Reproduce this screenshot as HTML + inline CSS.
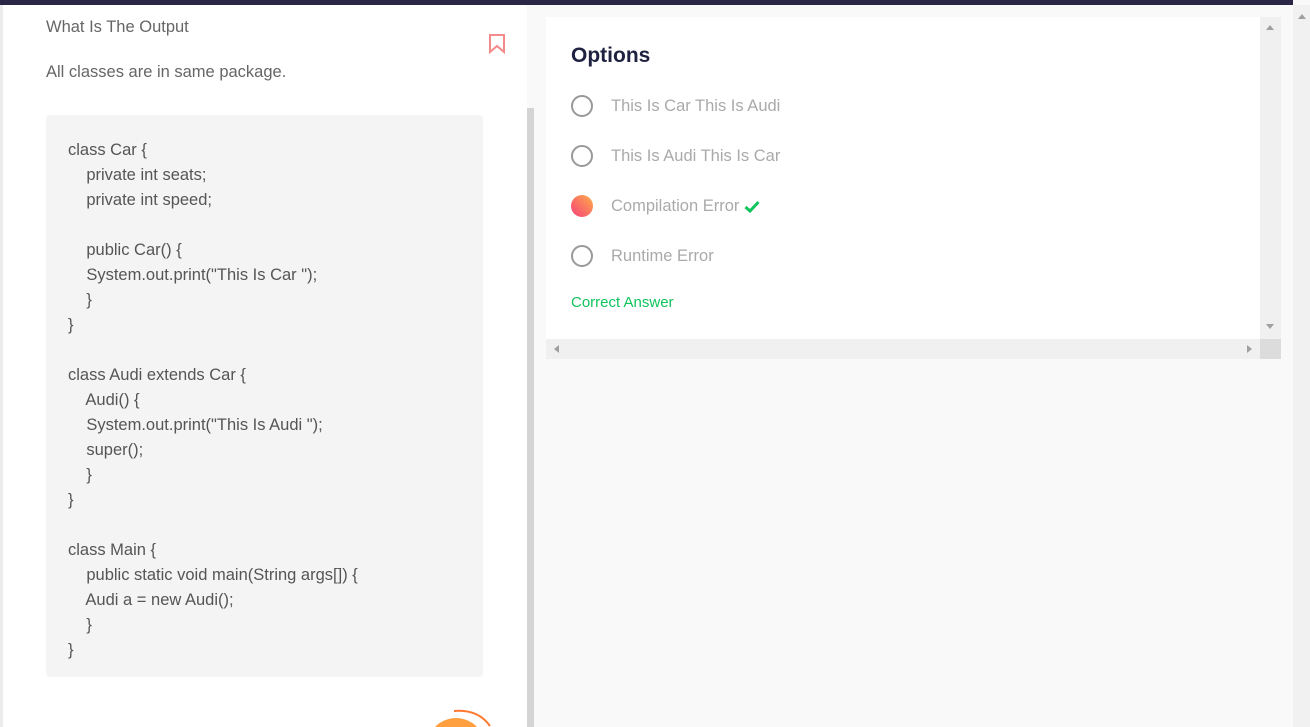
<!DOCTYPE html>
<html style="overflow:hidden;height:727px"><head><style>
*{margin:0;padding:0;box-sizing:border-box}
html,body{overflow:hidden}
body{width:1310px;height:727px;background:#f9f9f9;font-family:"Liberation Sans",sans-serif;position:relative}
.top{position:absolute;left:0;top:0;width:1293px;height:5px;background:#2a2646}
.left{position:absolute;left:3px;top:5px;width:524px;height:722px;background:#fff}
.lsh{position:absolute;left:0;top:5px;width:3px;height:722px;background:#ececec}
.sb1{position:absolute;left:527px;top:108px;width:7px;height:619px;background:#d4d4d4}
.q{position:absolute;left:46px;color:#666;font-size:16.5px}
.code{position:absolute;left:46px;top:115px;width:437px;height:562px;background:#f4f4f4;border-radius:4px;padding:23px 0 0 22px;color:#555;font-size:16.5px;line-height:25px;white-space:pre}
.card{position:absolute;left:546px;top:17px;width:714px;height:322px;background:#fff}
.hbar{position:absolute;left:546px;top:339px;width:714px;height:20px;background:#f0f0f0}
.vbar{position:absolute;left:1260px;top:17px;width:21px;height:322px;background:#f0f0f0}
.corner{position:absolute;left:1260px;top:339px;width:21px;height:20px;background:#dcdcdc}
.psb{position:absolute;left:1293px;top:5px;width:17px;height:722px;background:#f1f1f1}
.opt{position:absolute;left:571px;font-size:16.5px;color:#aaa;display:flex;align-items:center}
.rad{width:22px;height:22px;border:2.5px solid #999;border-radius:50%;margin-right:18px}
.tri{position:absolute;width:0;height:0}
</style></head><body>
<div class="top"></div>
<div class="lsh"></div>
<div class="left"></div>
<div class="sb1"></div>
<div class="q" style="top:18px">What Is The Output</div>
<div class="q" style="top:63px">All classes are in same package.</div>
<svg style="position:absolute;left:488px;top:34px" width="18" height="20" viewBox="0 0 18 20"><path d="M2 1H16V18L9 12L2 18Z" fill="none" stroke="#f58a8a" stroke-width="2"/></svg>
<div class="code">class Car {
    private int seats;
    private int speed;

    public Car() {
    System.out.print("This Is Car ");
    }
}

class Audi extends Car {
    Audi() {
    System.out.print("This Is Audi ");
    super();
    }
}

class Main {
    public static void main(String args[]) {
    Audi a = new Audi();
    }
}</div>
<svg style="position:absolute;left:420px;top:707px" width="80" height="20" viewBox="0 0 80 20"><path d="M15 20A29 29 0 0 1 57 20Z" fill="#ffa040"/><path d="M34 4Q58 2 70 19" fill="none" stroke="#ff7a30" stroke-width="2"/></svg>
<div class="card"></div>
<div class="hbar"></div><div class="vbar"></div><div class="corner"></div>
<div class="psb"></div>
<div class="tri" style="left:1266px;top:25px;border:4px solid transparent;border-bottom:5px solid #a0a0a0;border-top:0"></div>
<div class="tri" style="left:1266px;top:324px;border:4px solid transparent;border-top:5px solid #a0a0a0;border-bottom:0"></div>
<div class="tri" style="left:554px;top:345px;border:4px solid transparent;border-right:5px solid #a0a0a0;border-left:0"></div>
<div class="tri" style="left:1247px;top:345px;border:4px solid transparent;border-left:5px solid #a0a0a0;border-right:0"></div>
<div class="tri" style="left:1298px;top:14px;border:4px solid transparent;border-bottom:5px solid #a0a0a0;border-top:0"></div>
<div style="position:absolute;left:571px;top:44px;font-size:21px;font-weight:bold;color:#1e2140">Options</div>
<div class="opt" style="top:95px"><div class="rad"></div>This Is Car This Is Audi</div>
<div class="opt" style="top:145px"><div class="rad"></div>This Is Audi This Is Car</div>
<div class="opt" style="top:195px"><div class="rad" style="border:none;background:linear-gradient(45deg,#f5407a,#ffae4a)"></div>Compilation Error <svg style="margin-left:5px" width="16" height="13" viewBox="0 0 16 13"><path d="M1.5 7L6 11L14.5 2" fill="none" stroke="#10c45c" stroke-width="3"/></svg></div>
<div class="opt" style="top:245px"><div class="rad"></div>Runtime Error</div>
<div style="position:absolute;left:571px;top:294px;font-size:15px;color:#10c45c">Correct Answer</div>
</body></html>
